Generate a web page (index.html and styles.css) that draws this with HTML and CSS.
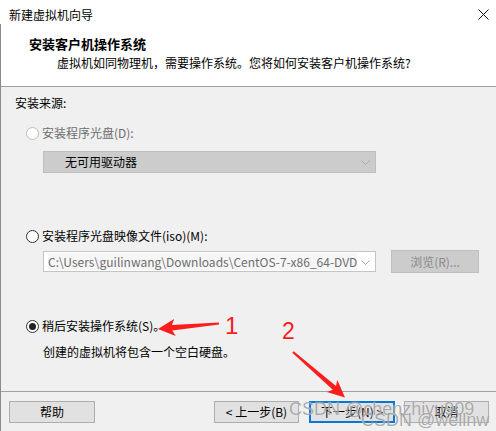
FILE: index.html
```html
<!DOCTYPE html>
<html lang="zh-CN">
<head>
<meta charset="utf-8">
<title>新建虚拟机向导</title>
<link rel="stylesheet" href="styles.css">
</head>
<body>
<div class="window">
  <div class="titlebar">
    <span class="title">新建虚拟机向导</span>
    <svg class="close" width="11" height="11" viewBox="0 0 11 11"><path d="M0.5 0.5 L10.5 10.5 M10.5 0.5 L0.5 10.5" stroke="#111" stroke-width="1" fill="none"/></svg>
  </div>
  <div class="main">
    <div class="header">
      <div class="h-title">安装客户机操作系统</div>
      <div class="h-sub">虚拟机如同物理机，需要操作系统。您将如何安装客户机操作系统?</div>
    </div>
    <div class="content">
      <div class="section-label">安装来源:</div>

      <div class="radio-row disabled row1">
        <span class="radio"></span><span class="label">安装程序光盘(D):</span>
      </div>
      <div class="combo combo-disabled">
        <span class="combo-text">无可用驱动器</span>
        <svg class="chev" width="9" height="5" viewBox="0 0 9 5"><path d="M0.5 0.5 L4.5 4.5 L8.5 0.5" stroke="#a8a8a8" fill="none"/></svg>
      </div>

      <div class="radio-row row2">
        <span class="radio"></span><span class="label">安装程序光盘映像文件(iso)(M):</span>
      </div>
      <div class="iso-row">
        <div class="combo combo-iso">
          <span class="path">C:\Users\guilinwang\Downloads\CentOS-7-x86_64-DVD-2009.iso</span>
          <svg class="chev" width="9" height="5" viewBox="0 0 9 5"><path d="M0.5 0.5 L4.5 4.5 L8.5 0.5" stroke="#a8a8a8" fill="none"/></svg>
        </div>
        <div class="btn btn-disabled browse">浏览(R)...</div>
      </div>

      <div class="radio-row row3">
        <span class="radio checked"></span><span class="label">稍后安装操作系统(S)。</span>
      </div>
      <div class="desc">创建的虚拟机将包含一个空白硬盘。</div>
    </div>
    <div class="footer">
      <div class="btn help">帮助</div>
      <div class="spacer"></div>
      <div class="btn back">&lt; 上一步(B)</div>
      <div class="btn next">下一步(N) &gt;</div>
      <div class="btn cancel">取消</div>
    </div>
  </div>

  <svg class="annot" width="496" height="431" viewBox="0 0 496 431">
    <polygon fill="#fb1c1c" points="218.9,322.4 172.0,325.0 174.1,319.0 158,329 175.7,336.0 172.2,330.4 219.1,324.6"/>
    <polygon fill="#fb1c1c" points="293.7,351.2 336.0,385.9 337.3,379.9 345,397.5 326.9,391.9 332.8,389.7 292.3,352.8"/>
  </svg>
  <div class="num num1">1</div>
  <div class="num num2">2</div>
  <div class="wm wm1">CSDN @chenzhiyu909</div>
  <div class="wm wm2">CSDN @wellnw</div>
</div>
</body>
</html>
```
FILE: styles.css
```css
html, body {
  margin: 0;
  padding: 0;
  background: #f0f0f0;
}
.window {
  position: relative;
  width: 496px;
  height: 431px;
  overflow: hidden;
  font-family: "Noto Sans CJK SC", "Microsoft YaHei", sans-serif;
  font-size: 12px;
  color: #000;
  background: #f0f0f0;
}
.titlebar {
  height: 24px;
  background: #fff;
  display: flex;
  align-items: flex-start;
  justify-content: space-between;
  padding: 7px 7px 0 9px;
  box-sizing: border-box;
  line-height: 16px;
}
.close {
  margin-top: 2px;
}
.main {
  border-left: 1px solid #8a8a8a;
  height: 407px;
  box-sizing: border-box;
  display: flex;
  flex-direction: column;
}
.header {
  background: #fff;
  border-bottom: 1px solid #a0a0a0;
  padding: 11px 0 0 28px;
  height: 63px;
  box-sizing: border-box;
}
.h-title {
  font-weight: 700;
  font-size: 13px;
  line-height: 18px;
}
.h-sub {
  line-height: 18px;
  margin-top: 1px;
  padding-left: 28px;
}
.content {
  flex: 1;
  padding: 7px 0 0 14px;
  line-height: 18px;
}
.radio-row {
  display: flex;
  align-items: center;
  gap: 3px;
  margin-left: 11px;
  height: 18px;
}
.row1 { margin-top: 12px; }
.row2 { margin-top: 54px; }
.row3 { margin-top: 44px; }
.radio {
  width: 13px;
  height: 13px;
  border-radius: 50%;
  box-sizing: border-box;
  border: 1px solid #333;
  background: #fff;
  display: flex;
  align-items: center;
  justify-content: center;
}
.radio.checked::after {
  content: "";
  width: 7px;
  height: 7px;
  border-radius: 50%;
  background: #222;
}
.disabled .radio {
  border-color: #bcbcbc;
}
.disabled .label {
  color: #6d6d6d;
}
.combo {
  box-sizing: border-box;
  display: flex;
  align-items: center;
  margin-left: 28px;
  width: 333px;
  position: relative;
}
.combo-disabled {
  margin-top: 9px;
  height: 22px;
  background: #cccccc;
  border: 1px solid #bfbfbf;
  padding-left: 21px;
}
.chev {
  position: absolute;
  right: 5px;
  top: 8px;
}
.iso-row {
  display: flex;
  align-items: center;
  margin-top: 5px;
  height: 23px;
}
.combo-iso {
  height: 21px;
  background: #fff;
  border: 1px solid #c4c4c4;
  padding-left: 4px;
}
.path {
  display: block;
  width: 309px;
  overflow: hidden;
  white-space: nowrap;
  color: #6d6d6d;
  background: #f6f6f6;
  line-height: 17px;
  font-size: 12px;
}
.btn {
  box-sizing: border-box;
  height: 22px;
  width: 86px;
  background: #e1e1e1;
  border: 1px solid #adadad;
  display: flex;
  align-items: center;
  justify-content: center;
  line-height: 16px;
}
.btn-disabled {
  background: #cccccc;
  border-color: #bfbfbf;
  color: #8a8a8a;
}
.browse {
  margin-left: 15px;
  width: 88px;
  height: 23px;
}
.desc {
  margin-top: 8px;
  margin-left: 28px;
}
.footer {
  border-top: 1px solid #a0a0a0;
  height: 40px;
  box-sizing: border-box;
  display: flex;
  align-items: flex-start;
  padding: 9px 7px 0 8px;
}
.spacer { flex: 1; }
.back { width: 85px; }
.next {
  margin-left: 10px;
  border: 2px solid #0078d7;
}
.cancel {
  margin-left: 9px;
  width: 85px;
}
.annot {
  position: absolute;
  left: 0;
  top: 0;
  pointer-events: none;
}
.num {
  position: absolute;
  font-family: "Liberation Sans", Arial, sans-serif;
  color: #fb1c1c;
  line-height: 1;
}
.num1 {
  left: 225px;
  top: 314px;
  font-size: 24px;
}
.num2 {
  left: 282px;
  top: 320px;
  font-size: 23px;
}
.wm {
  position: absolute;
  font-family: "Liberation Sans", Arial, sans-serif;
  font-size: 18px;
  line-height: 1;
  color: rgba(100, 100, 100, 0.55);
  text-shadow: 0 0 1px rgba(255, 255, 255, 0.9);
  white-space: nowrap;
}
.wm1 {
  left: 289px;
  top: 400px;
}
.wm2 {
  left: 361px;
  top: 411px;
}
```
